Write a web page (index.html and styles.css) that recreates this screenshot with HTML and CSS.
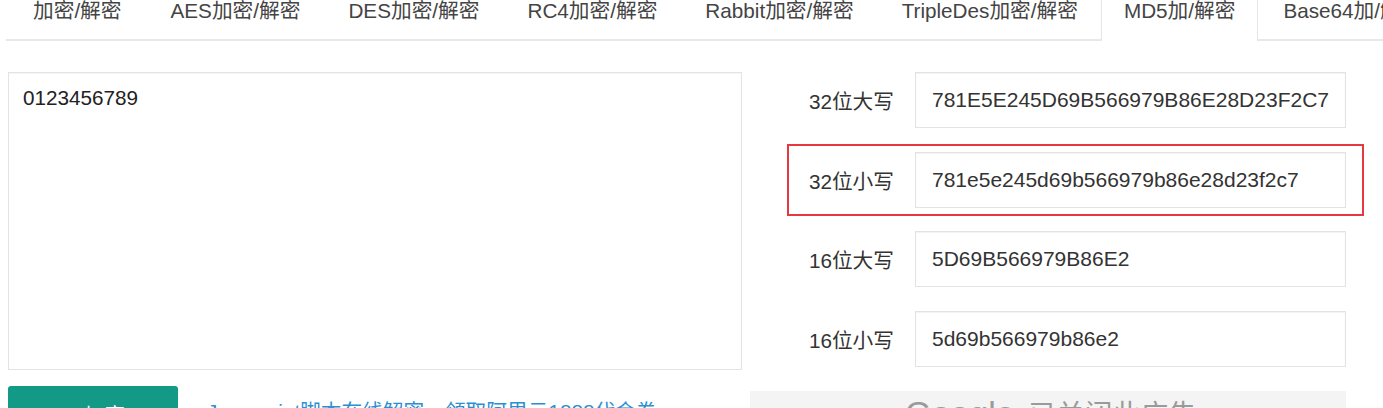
FILE: index.html
```html
<!DOCTYPE html>
<html lang="zh-CN">
<head>
<meta charset="utf-8">
<title>MD5加/解密</title>
<link rel="stylesheet" href="styles.css">
</head>
<body>
<div class="page">
  <ul class="tabs">
    <li class="tab first">加密/解密</li>
    <li class="tab">AES加密/解密</li>
    <li class="tab">DES加密/解密</li>
    <li class="tab">RC4加密/解密</li>
    <li class="tab">Rabbit加密/解密</li>
    <li class="tab">TripleDes加密/解密</li>
    <li class="tab active">MD5加/解密</li>
    <li class="tab">Base64加/解密</li>
  </ul>

  <div class="main">
    <div class="left">
      <div class="textarea">0123456789</div>
      <div class="actions">
        <button class="btn">MD5加密 <span class="chev">❯</span></button>
        <a class="link">Javascript脚本在线解密，领取阿里云1888代金券</a>
      </div>
    </div>
    <div class="right">
      <div class="row">
        <div class="label">32位大写</div>
        <div class="field">781E5E245D69B566979B86E28D23F2C7</div>
      </div>
      <div class="row highlight">
        <div class="label">32位小写</div>
        <div class="field">781e5e245d69b566979b86e28d23f2c7</div>
      </div>
      <div class="row">
        <div class="label">16位大写</div>
        <div class="field">5D69B566979B86E2</div>
      </div>
      <div class="row">
        <div class="label">16位小写</div>
        <div class="field">5d69b566979b86e2</div>
      </div>
      <div class="ad"><span class="g">Google</span> 已关闭此广告</div>
    </div>
  </div>
</div>
</body>
</html>
```

FILE: styles.css
```css
* { box-sizing: border-box; }
html, body { margin: 0; padding: 0; background: #fff; overflow: hidden; }
body {
  font-family: "Liberation Sans", "Noto Sans CJK SC", sans-serif;
  font-size: 20.7px;
  color: #333;
}
.page { width: 1383px; height: 408px; overflow: hidden; }

.tabs {
  list-style: none;
  margin: 0 0 0 6px;
  padding: 0;
  display: flex;
  border-bottom: 2px solid #e8e8e8;
  height: 41px;
  white-space: nowrap;
}
.tab {
  padding: 0 22px 0 22px;
  margin-right: 2px;
  line-height: 22px;
  height: 41px;
  border: 1px solid transparent;
  border-top: 0;
  border-bottom: 0;
  color: #444;
  flex: none;
}
.tab.first { padding-left: 26px; margin-right: 3px; }
.tab.active {
  border-color: #e6e6e6;
  background: #fff;
  height: 41px;
  position: relative;
  margin-left: -2px;
}
.tab.active::after {
  content: "";
  position: absolute;
  left: 0; right: 0; bottom: -2px;
  height: 2px;
  background: #fff;
}

.main {
  display: flex;
  gap: 8px;
  padding-left: 8px;
  margin-top: 31px;
}
.left { width: 734px; flex: none; }
.textarea {
  height: 298px;
  border: 1px solid #e3e3e3;
  box-shadow: inset 0 1px 1px rgba(0,0,0,0.04);
  padding: 10px 14px;
  line-height: 29px;
  color: #222;
}
.actions {
  display: flex;
  align-items: flex-start;
  margin-top: 16px;
}
.btn {
  width: 170px;
  height: 50px;
  border: 0;
  border-radius: 3px;
  background: #129a87;
  color: #fff;
  font: inherit;
  padding: 10px 0 0;
  text-align: center;
  line-height: 24px;
  flex: none;
}
.chev { font-size: 18px; }
.link {
  margin-left: 29px;
  margin-top: 14px;
  color: #2b8fd3;
  line-height: 24px;
  white-space: nowrap;
}

.right {
  width: 596px;
  flex: none;
  display: flex;
  flex-direction: column;
  gap: 23.5px;
}
.row {
  display: flex;
  align-items: center;
  height: 56px;
  position: relative;
}
.label {
  width: 165px;
  flex: none;
  text-align: right;
  padding-right: 21px;
  color: #333;
}
.field {
  flex: 1;
  height: 56px;
  border: 1px solid #e3e3e3;
  box-shadow: inset 0 1px 1px rgba(0,0,0,0.05);
  padding: 0 16px;
  line-height: 54px;
  font-size: 21px;
  color: #333;
  white-space: nowrap;
  overflow: hidden;
}
.highlight::after {
  content: "";
  position: absolute;
  left: 37px;
  right: -18px;
  top: -8px;
  bottom: -8px;
  border: 2px solid #e5383f;
  pointer-events: none;
}
.ad {
  height: 60px;
  margin-top: 1px;
  background: #f4f4f4;
  color: #9a9a9a;
  font-size: 28px;
  padding: 4px 0 0 155px;
  line-height: 36px;
  white-space: nowrap;
}
.ad .g { font-size: 34px; margin-right: 6px; }
```
